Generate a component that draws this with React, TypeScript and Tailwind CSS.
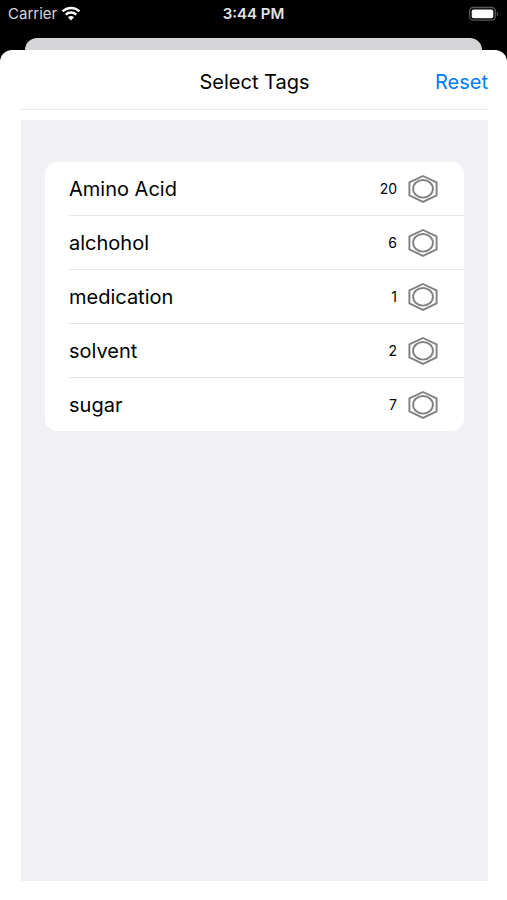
const tags = [
  { name: "Amino Acid", count: 20 },
  { name: "alchohol", count: 6 },
  { name: "medication", count: 1 },
  { name: "solvent", count: 2 },
  { name: "sugar", count: 7 },
];

function WifiIcon() {
  return (
    <svg className="h-4 w-5" viewBox="0 0 20 16" fill="none" stroke="#fff" aria-hidden="true">
      <path d="M1.6 5.4C6.2.8 13.8.8 18.4 5.4" strokeWidth="2.4" />
      <path d="M4.7 8.6C7.6 5.8 12.4 5.8 15.3 8.6" strokeWidth="2.3" />
      <path d="M10 14.4 7 11.3C8.6 9.7 11.4 9.7 13 11.3Z" fill="#fff" stroke="none" />
    </svg>
  );
}

function BatteryIcon() {
  return (
    <svg className="h-4 w-8" viewBox="0 0 32 16" fill="none" aria-hidden="true">
      <rect x="2.7" y="1.5" width="25.6" height="12.6" rx="3.6" stroke="#58585a" strokeWidth="1.3" />
      <rect x="4.7" y="3.4" width="21.6" height="8.8" rx="1.8" fill="#fff" />
      <path d="M29.8 5.4c1.8.7 1.8 4.1 0 4.8Z" fill="#58585a" />
    </svg>
  );
}

function BenzeneIcon() {
  return (
    <svg className="h-8 w-8 shrink-0" viewBox="0 0 32 32" fill="none" stroke="#808080" strokeWidth="1.9" aria-hidden="true">
      <path d="M16 3 29.6 9.4V22.4L16 28.9 2.4 22.4V9.4Z" />
      <ellipse cx="16" cy="15.8" rx="9.9" ry="8.8" />
    </svg>
  );
}

export default function App() {
  return (
    <div className="flex min-h-screen flex-col bg-black font-['Inter','Liberation_Sans',sans-serif] text-black">
      <header className="grid h-7 grid-cols-[1fr_auto_1fr] items-center px-2 text-[15px] text-white">
        <div className="flex items-center gap-1 text-[#d8d8d8]">
          <span>Carrier</span>
          <WifiIcon />
        </div>
        <time className="text-center font-semibold whitespace-nowrap text-[#e4e4e4]">3:44 PM</time>
        <div className="flex justify-end">
          <BatteryIcon />
        </div>
      </header>
      <div className="mx-[25px] mt-[10px] h-3 rounded-t-xl bg-[#d5d5d7]" />
      <main className="flex flex-1 flex-col rounded-t-xl bg-white pr-[19px] pb-[19px] pl-[21px]">
        <div className="grid h-[60px] grid-cols-[1fr_auto_1fr] items-center border-b border-[#e9e9eb] pt-1 text-xl">
          <h1 className="col-start-2">Select Tags</h1>
          <button type="button" className="justify-self-end text-[#007aff]">
            Reset
          </button>
        </div>
        <section className="mt-[10px] flex-1 bg-[#f0f0f5] px-6 pt-[42px]">
          <ul className="overflow-hidden rounded-xl bg-white pl-6">
            {tags.map((tag) => (
              <li key={tag.name} className="border-b border-[#e6e6e8] last:border-b-0">
                <button type="button" className="flex h-[53px] w-full items-center gap-[10px] pr-[25px] text-left">
                  <span className="flex-1 text-xl">{tag.name}</span>
                  <span className="text-sm">{tag.count}</span>
                  <BenzeneIcon />
                </button>
              </li>
            ))}
          </ul>
        </section>
      </main>
    </div>
  );
}
